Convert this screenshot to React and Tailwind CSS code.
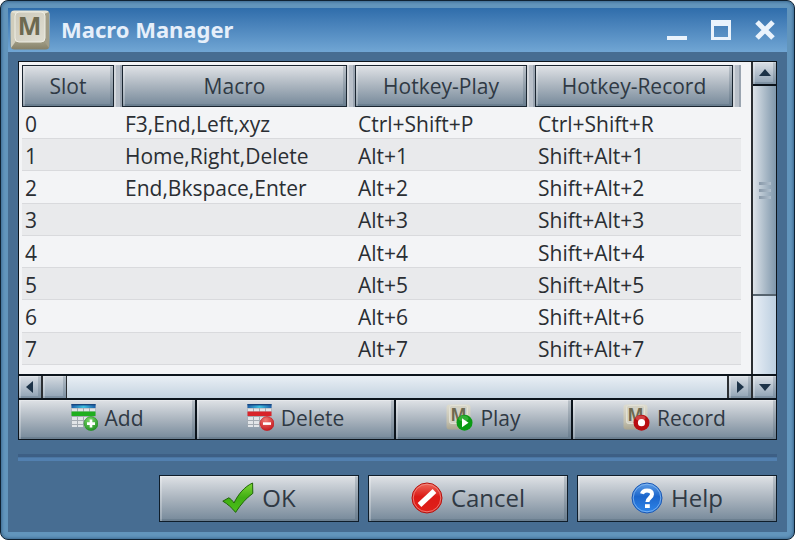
import React from 'react';

const ROWS = [
  ['0', 'F3,End,Left,xyz', 'Ctrl+Shift+P', 'Ctrl+Shift+R'],
  ['1', 'Home,Right,Delete', 'Alt+1', 'Shift+Alt+1'],
  ['2', 'End,Bkspace,Enter', 'Alt+2', 'Shift+Alt+2'],
  ['3', '', 'Alt+3', 'Shift+Alt+3'],
  ['4', '', 'Alt+4', 'Shift+Alt+4'],
  ['5', '', 'Alt+5', 'Shift+Alt+5'],
  ['6', '', 'Alt+6', 'Shift+Alt+6'],
  ['7', '', 'Alt+7', 'Shift+Alt+7'],
];

const METAL = 'bg-linear-to-b from-[#dfe2e6] via-[#aab4be] to-[#76899a]';
const BEVEL =
  'shadow-[inset_2px_1px_0_rgba(255,255,255,0.25),inset_-3px_-2px_0_rgba(60,80,100,0.22)]';

function KeyCap({ id, className }) {
  return (
    <svg viewBox="0 0 40 40" className={className} aria-hidden="true">
      <defs>
        <linearGradient id={id + '-side'} x1="0" y1="0" x2="0" y2="1">
          <stop offset="0" stopColor="#e6e4d6" />
          <stop offset="0.6" stopColor="#b9b6a0" />
          <stop offset="1" stopColor="#858068" />
        </linearGradient>
        <linearGradient id={id + '-top'} x1="0" y1="0" x2="1" y2="1">
          <stop offset="0" stopColor="#cbc8ba" />
          <stop offset="1" stopColor="#e0ded2" />
        </linearGradient>
      </defs>
      <rect x="0.5" y="0.5" width="39" height="39" rx="4" fill={`url(#${id}-side)`} />
      <path d="M1 38 L6 31 V4 L1 2 Z" fill="#d0cdbc" />
      <path d="M39 38 L34 31 V4 L39 2 Z" fill="#a19d88" />
      <rect x="5" y="2" width="30" height="30" rx="4" fill={`url(#${id}-top)`} stroke="#efeee4" strokeWidth="1" />
      <text x="19.5" y="25" textAnchor="middle" fontSize="25" fontWeight="700" fill="#6d6950" fontFamily="Open Sans, sans-serif">
        M
      </text>
    </svg>
  );
}

function TableIcon({ id, row, dark, light, plus }) {
  return (
    <svg viewBox="0 0 27 27" className="size-[27px]" aria-hidden="true">
      <defs>
        <linearGradient id={id + '-head'} x1="0" y1="0" x2="1" y2="0">
          <stop offset="0" stopColor="#1d5fa8" />
          <stop offset="0.5" stopColor="#3fc0e0" />
          <stop offset="1" stopColor="#1d5fa8" />
        </linearGradient>
        <radialGradient id={id + '-ball'} cx="0.4" cy="0.25" r="0.8">
          <stop offset="0" stopColor={light} />
          <stop offset="1" stopColor={dark} />
        </radialGradient>
      </defs>
      <rect x="0.5" y="0.5" width="24" height="22" fill="#a4abb2" />
      <g fill="#e2e5e8">
        {[4.5, 13, 17, 21].map((y) =>
          [1, 7, 13, 19].map((x) => (
            <rect key={x + '-' + y} x={x} y={y} width="5" height={y === 21 ? 2 : 3} />
          ))
        )}
      </g>
      <rect x="0.5" y="0" width="24" height="4" fill={`url(#${id}-head)`} />
      <rect x="0.5" y="0" width="24" height="1.4" fill="#17457f" />
      <rect x="0.5" y="7.5" width="24" height="4.5" fill={row} />
      <circle cx="20" cy="19.6" r="7" fill={`url(#${id}-ball)`} stroke={dark} strokeWidth="0.6" />
      <path d={plus ? 'M16 19.6 H24 M20 15.6 V23.6' : 'M16 19.6 H24'} stroke="#fff" strokeWidth="2.6" />
    </svg>
  );
}

function KeyFace({ id }) {
  return (
    <g>
      <defs>
        <linearGradient id={id + '-key'} x1="0" y1="0" x2="0" y2="1">
          <stop offset="0" stopColor="#dedccf" />
          <stop offset="0.7" stopColor="#c3c0ae" />
          <stop offset="1" stopColor="#a9a590" />
        </linearGradient>
      </defs>
      <rect x="0.5" y="0.5" width="24" height="25" rx="3" fill={`url(#${id}-key)`} />
      <rect x="3.5" y="1.5" width="18" height="18" rx="2" fill="#d3d1c4" stroke="#e6e4d9" strokeWidth="0.8" />
      <text x="12.5" y="16.5" textAnchor="middle" fontSize="17" fontWeight="700" fill="#6d6950" fontFamily="Open Sans, sans-serif">
        M
      </text>
    </g>
  );
}

function PlayIcon() {
  return (
    <svg viewBox="0 0 27 27" className="size-[27px]" aria-hidden="true">
      <KeyFace id="play" />
      <circle cx="18.5" cy="18.7" r="8" fill="#0a9a14" />
      <ellipse cx="17.5" cy="14.5" rx="5" ry="3" fill="#4cc04c" opacity="0.6" />
      <path d="M16 14.2 L22.5 18.7 L16 23.2 Z" fill="#fff" />
    </svg>
  );
}

function RecordIcon() {
  return (
    <svg viewBox="0 0 27 27" className="size-[27px]" aria-hidden="true">
      <KeyFace id="record" />
      <circle cx="18.5" cy="18.7" r="8" fill="#b80d10" />
      <ellipse cx="17.5" cy="14" rx="5" ry="2.5" fill="#dd6060" opacity="0.6" />
      <circle cx="18.5" cy="18.7" r="3.6" fill="#fff" />
    </svg>
  );
}

function CheckIcon() {
  return (
    <svg viewBox="0 0 32 32" className="size-8" aria-hidden="true">
      <defs>
        <linearGradient id="check" x1="0" y1="0" x2="0" y2="1">
          <stop offset="0" stopColor="#7ed636" />
          <stop offset="0.5" stopColor="#3fae12" />
          <stop offset="1" stopColor="#4cc01c" />
        </linearGradient>
      </defs>
      <path
        d="M0.8 19.2 L6.8 15.8 C9 17 10.6 18.8 12 21 C16 12.6 22.5 4.6 30.6 1 L30.8 11.4 C24.5 15.8 18.5 22.6 13.6 30.4 C10 26 5.8 22 0.8 19.2 Z"
        fill="url(#check)"
        stroke="#1f6407"
        strokeWidth="1"
        strokeLinejoin="round"
      />
    </svg>
  );
}

function CancelIcon() {
  return (
    <svg viewBox="0 0 32 32" className="size-8" aria-hidden="true">
      <defs>
        <linearGradient id="stop" x1="0" y1="0" x2="0" y2="1">
          <stop offset="0" stopColor="#ee6a5c" />
          <stop offset="0.45" stopColor="#dc1a16" />
          <stop offset="1" stopColor="#e0201a" />
        </linearGradient>
      </defs>
      <circle cx="16" cy="16" r="15" fill="url(#stop)" stroke="#b5120e" strokeWidth="1" />
      <circle cx="16" cy="16" r="13.8" fill="none" stroke="#f09088" strokeWidth="0.8" />
      <path d="M8.5 23 L23.5 9" stroke="#fff" strokeWidth="5.4" />
    </svg>
  );
}

function HelpIcon() {
  return (
    <svg viewBox="0 0 32 32" className="size-8" aria-hidden="true">
      <defs>
        <linearGradient id="help" x1="0" y1="0" x2="0" y2="1">
          <stop offset="0" stopColor="#5f9ee6" />
          <stop offset="0.45" stopColor="#1c66cc" />
          <stop offset="1" stopColor="#2f86ea" />
        </linearGradient>
      </defs>
      <circle cx="16" cy="16" r="15" fill="url(#help)" stroke="#1a58b4" strokeWidth="1" />
      <circle cx="16" cy="16" r="13.8" fill="none" stroke="#8cbcf2" strokeWidth="0.8" />
      <path
        d="M11 11.8 C11.6 9.4 13.4 8.4 16 8.4 C19 8.4 21 9.8 21 12.2 C21 15.6 16.4 15.8 16.4 20"
        fill="none"
        stroke="#fff"
        strokeWidth="4"
      />
      <rect x="14" y="22.2" width="4.8" height="3.8" fill="#fff" />
    </svg>
  );
}

function Arrow({ d }) {
  return (
    <svg viewBox="0 0 12 12" className="size-3" aria-hidden="true">
      <path d={d} fill="#1d3348" />
    </svg>
  );
}

function ScrollButton({ label, d, className }) {
  return (
    <button
      type="button"
      aria-label={label}
      className={`flex items-center justify-center bg-linear-to-b from-[#dbe0e6] to-[#8fa2b4] ${BEVEL} ${className}`}
    >
      <Arrow d={d} />
    </button>
  );
}

function HeaderCell({ children }) {
  return (
    <th scope="col" className="h-[42px] p-0 font-normal">
      <div className="flex h-[42px]">
        <button type="button" className={`min-w-0 flex-1 border border-[#1a2530] text-[#2f3944] ${METAL} ${BEVEL}`}>
          {children}
        </button>
        <span className="w-2 border-x-2 border-l-[#d4d8dd] border-r-[#9aa4b0] bg-[#b9c0c9]" />
      </div>
    </th>
  );
}

function ToolButton({ icon, children, className }) {
  return (
    <button
      type="button"
      className={`flex items-center justify-center gap-[7px] border-[#0c141c] pb-1 text-[#2f3944] ${METAL} ${BEVEL} ${className}`}
    >
      {icon}
      {children}
    </button>
  );
}

function DialogButton({ icon, children }) {
  return (
    <button
      type="button"
      className={`flex h-[47px] w-[200px] items-center justify-center gap-2 border border-[#0f1d2a] pb-0.5 text-[24px] text-[#2f3944] ${METAL} ${BEVEL}`}
    >
      {icon}
      {children}
    </button>
  );
}

export default function App() {
  return (
    <div className="min-h-screen bg-white font-['Open_Sans','Noto_Sans',sans-serif] text-[21px] leading-6">
      <div className="flex min-h-screen flex-col rounded-lg border border-[#0f2233] bg-[#6295bc] p-[7px] shadow-[inset_0_0_3px_1px_#3d6a90]">
        <header className="flex h-11 items-center bg-linear-to-b from-[#2f6dab] to-[#71a6d4] pr-3 pl-0.5">
          <KeyCap id="app" className="size-10" />
          <h1 className="flex-1 pb-0.5 pl-[11px] font-['Noto_Sans','Open_Sans',sans-serif] text-[22px] font-bold text-[#e6effa]">
            Macro Manager
          </h1>
          <div className="flex items-center gap-6">
            <button type="button" aria-label="Minimize">
              <svg viewBox="0 0 20 20" className="size-5">
                <rect x="0" y="16" width="20" height="4" fill="#eaf3fc" />
              </svg>
            </button>
            <button type="button" aria-label="Maximize">
              <svg viewBox="0 0 20 20" className="size-5">
                <path d="M0 0 H20 V20 H0 Z M3 6 V17 H17 V6 Z" fill="#eaf3fc" fillRule="evenodd" />
              </svg>
            </button>
            <button type="button" aria-label="Close">
              <svg viewBox="0 0 20 20" className="size-5">
                <path d="M2 2 L18 18 M18 2 L2 18" stroke="#eaf3fc" strokeWidth="5" />
              </svg>
            </button>
          </div>
        </header>

        <main className="flex-1 bg-[#476d92] px-2.5 pt-[9px] pb-2.5">
          <section className="border border-[#0c141c]">
            <div className="flex">
              <div className="min-w-0 flex-1 bg-[#f3f4f6] pt-[3px] pr-2.5 pb-[9px] pl-[3px]">
                <table className="h-[300px] w-full table-fixed border-collapse text-[#2a2e33]">
                  <colgroup>
                    <col className="w-[100px]" />
                    <col />
                    <col className="w-[180px]" />
                    <col className="w-[206px]" />
                  </colgroup>
                  <thead>
                    <tr>
                      <HeaderCell>Slot</HeaderCell>
                      <HeaderCell>Macro</HeaderCell>
                      <HeaderCell>Hotkey-Play</HeaderCell>
                      <HeaderCell>Hotkey-Record</HeaderCell>
                    </tr>
                  </thead>
                  <tbody>
                    {ROWS.map((row) => (
                      <tr key={row[0]} className="border-b border-[#d9dadd] even:bg-[#e9eaec]">
                        {row.map((cell, i) => (
                          <td key={i} className="truncate p-0 pt-0.5 pl-[3px]">
                            {cell}
                          </td>
                        ))}
                      </tr>
                    ))}
                  </tbody>
                </table>
              </div>
              <div className="flex w-[25px] flex-col border-l-2 border-[#2b2f33]">
                <ScrollButton label="Scroll up" d="M0 9 L6 2 L12 9 Z" className="h-6 border-b-2 border-[#0c141c]" />
                <div className="flex h-[210px] flex-col items-center justify-center gap-1 border-b-2 border-[#56646f] bg-linear-to-r from-[#dde3e9] to-[#7f97ab]">
                  <span className="h-[3px] w-3 bg-linear-to-r from-[#8999a9] to-[#b0bfcd]" />
                  <span className="h-[3px] w-3 bg-linear-to-r from-[#8999a9] to-[#b0bfcd]" />
                  <span className="h-[3px] w-3 bg-linear-to-r from-[#8999a9] to-[#b0bfcd]" />
                </div>
                <div className="flex-1 bg-linear-to-r from-[#e9eff6] to-[#bccfe0]" />
              </div>
            </div>
            <div className="flex h-6 border-t-2 border-[#0c141c]">
              <ScrollButton label="Scroll left" d="M9 0 L2 6 L9 12 Z" className="w-6 border-r-2 border-[#2b2f33]" />
              <div className={`w-6 border-r border-[#2b2f33] bg-linear-to-b from-[#d5dbe1] to-[#8fa2b4] ${BEVEL}`} />
              <div className="flex-1 bg-linear-to-b from-[#e9eff5] to-[#c4d3e0]" />
              <ScrollButton label="Scroll right" d="M3 0 L10 6 L3 12 Z" className="w-6 border-l-2 border-[#2b2f33]" />
              <ScrollButton label="Scroll down" d="M0 3 L12 3 L6 10 Z" className="w-[25px] border-l-2 border-[#2b2f33]" />
            </div>
            <div className="grid h-[41px] grid-cols-[178fr_199fr_177fr_203fr] border-t-2 border-[#0c141c]">
              <ToolButton className="border-r-2" icon={<TableIcon id="add" row="#1fae1f" dark="#1f8f1f" light="#7ad86a" plus />}>
                Add
              </ToolButton>
              <ToolButton className="border-r-2" icon={<TableIcon id="delete" row="#d8242a" dark="#c4141a" light="#f07a74" />}>
                Delete
              </ToolButton>
              <ToolButton className="border-r-2" icon={<PlayIcon />}>
                Play
              </ToolButton>
              <ToolButton icon={<RecordIcon />}>Record</ToolButton>
            </div>
          </section>

          <div className="mt-3.5 h-[7px] border-t-[3px] border-b-[3px] border-t-[#3d5f85] border-b-[#5280b0] bg-[#4a75a2]" />

          <footer className="mt-3.5 flex justify-end gap-[9px]">
            <DialogButton icon={<CheckIcon />}>OK</DialogButton>
            <DialogButton icon={<CancelIcon />}>Cancel</DialogButton>
            <DialogButton icon={<HelpIcon />}>Help</DialogButton>
          </footer>
        </main>
      </div>
    </div>
  );
}
